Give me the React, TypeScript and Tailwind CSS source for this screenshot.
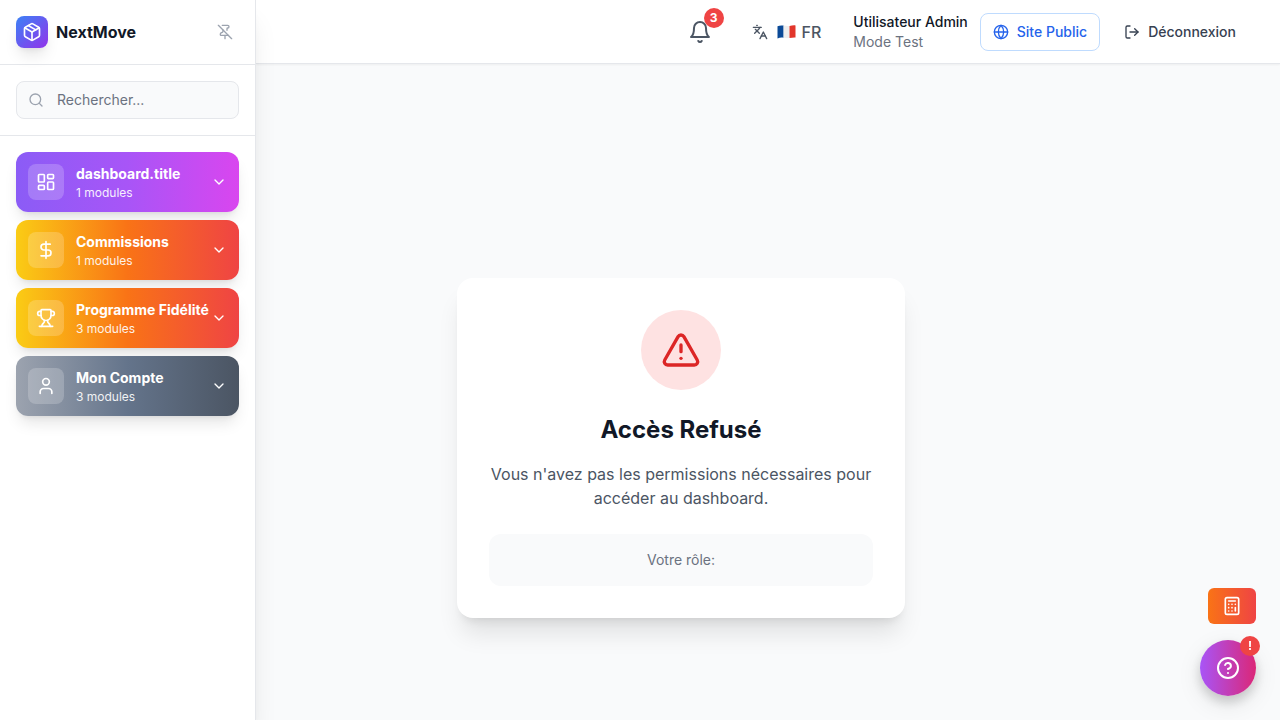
import {
  Calculator,
  ChevronDown,
  CircleHelp,
  DollarSign,
  Globe,
  Languages,
  LayoutDashboard,
  LogOut,
  Package,
  PinOff,
  Search,
  TriangleAlert,
  Trophy,
  User,
  type LucideIcon,
} from "lucide-react";

type Section = {
  title: string;
  count: number;
  icon: LucideIcon;
  gradient: string;
};

const sections: Section[] = [
  {
    title: "dashboard.title",
    count: 1,
    icon: LayoutDashboard,
    gradient: "from-[#8b5cf6] via-[#a855f7] to-[#d946ef]",
  },
  {
    title: "Commissions",
    count: 1,
    icon: DollarSign,
    gradient: "from-[#facc15] via-[#f97316] to-[#ef4444]",
  },
  {
    title: "Programme Fidélité",
    count: 3,
    icon: Trophy,
    gradient: "from-[#facc15] via-[#f97316] to-[#ef4444]",
  },
  {
    title: "Mon Compte",
    count: 3,
    icon: User,
    gradient: "from-[#9ca3af] via-[#64748b] to-[#4b5563]",
  },
];

function BellIcon() {
  return (
    <svg
      viewBox="0 0 24 24"
      className="size-6"
      fill="none"
      stroke="currentColor"
      strokeWidth="2"
      strokeLinecap="round"
      strokeLinejoin="round"
      aria-hidden="true"
    >
      <path d="M6 8a6 6 0 0 1 12 0c0 7 3 9 3 9H3s3-2 3-9" />
      <path d="M10.3 21a1.94 1.94 0 0 0 3.4 0" />
    </svg>
  );
}

function FrenchFlag() {
  return (
    <svg viewBox="0 0 20 14" className="h-3.5 w-5" role="img" aria-label="Français">
      <path d="M1.5 1.2C3.5 0.3 5.5 0.2 7.6 0.6V12.8C5.5 12.4 3.5 12.6 1.5 13.5Z" fill="#0b4a97" />
      <path d="M7.6 0.6C9.7 1 11.7 1.3 13.5 0.9V13.1C11.7 13.4 9.7 13.2 7.6 12.8Z" fill="#eeeeee" />
      <path d="M13.5 0.9C15.7 0.5 17.7 0.1 19.5 0.4V12.5C17.7 12.2 15.7 12.8 13.5 13.1Z" fill="#e2362b" />
    </svg>
  );
}

function SectionButton({ title, count, icon: Icon, gradient }: Section) {
  return (
    <button
      type="button"
      className={`flex w-full items-center gap-3 rounded-xl bg-linear-to-r/srgb p-3 text-left text-white shadow-lg ${gradient}`}
    >
      <span className="flex size-9 shrink-0 items-center justify-center rounded-lg bg-white/20">
        <Icon className="size-5" />
      </span>
      <span className="-my-1 min-w-0 flex-1 whitespace-nowrap">
        <span className="block text-sm leading-[22px] font-bold">{title}</span>
        <span className="block text-xs leading-4 opacity-90">{count} modules</span>
      </span>
      <ChevronDown className="-ml-3 size-4 shrink-0" />
    </button>
  );
}

function Sidebar() {
  return (
    <aside className="z-20 flex w-64 shrink-0 flex-col border-r border-[#e5e7eb] bg-white shadow-xl">
      <div className="flex items-center justify-between border-b border-[#e5e7eb] p-4">
        <div className="flex items-center gap-2">
          <div className="flex size-8 items-center justify-center rounded-lg bg-linear-to-br/srgb from-[#3b82f6] to-[#9333ea] text-white shadow-lg">
            <Package className="size-5" />
          </div>
          <span className="font-bold text-[#111827]">NextMove</span>
        </div>
        <button type="button" aria-label="Détacher le menu" className="p-1.5 text-[#9ca3af]">
          <PinOff className="size-4" />
        </button>
      </div>
      <div className="border-b border-[#e5e7eb] p-4">
        <label className="flex items-center gap-[13px] rounded-lg border border-[#e5e7eb] bg-[#f9fafb] py-2 pr-3 pl-[11px]">
          <Search className="size-4 shrink-0 text-[#9ca3af]" />
          <input
            type="text"
            aria-label="Rechercher"
            placeholder="Rechercher..."
            className="h-5 w-full min-w-0 bg-transparent text-sm text-[#111827] outline-none placeholder:text-[#6b7280]"
          />
        </label>
      </div>
      <nav className="flex flex-col gap-2 p-4">
        {sections.map((section) => (
          <SectionButton key={section.title} {...section} />
        ))}
      </nav>
    </aside>
  );
}

function TopBar() {
  return (
    <header className="z-10 flex h-16 shrink-0 items-center justify-end gap-4 border-b border-[#e5e7eb] bg-white px-8 shadow-xs">
      <button type="button" aria-label="Notifications" className="relative p-2 text-[#4b5563]">
        <BellIcon />
        <span className="absolute -top-1 -right-1 flex size-5 items-center justify-center rounded-full bg-[#ef4444] text-xs font-bold text-white">
          3
        </span>
      </button>
      <button type="button" className="flex items-center gap-2 px-4 py-2 font-medium text-[#4b5563]">
        <Languages className="size-4" />
        <span className="flex items-center gap-1.5">
          <FrenchFlag />
          FR
        </span>
      </button>
      <div className="flex items-center gap-3 text-sm">
        <div>
          <p className="font-medium text-[#111827]">Utilisateur Admin</p>
          <p className="text-[#6b7280]">Mode Test</p>
        </div>
        <a
          href="#site"
          className="flex items-center gap-2 rounded-lg border border-[#bfdbfe] px-3 py-2 font-medium text-[#2563eb]"
        >
          <Globe className="size-4" />
          Site Public
        </a>
        <button type="button" className="flex items-center gap-2 px-3 py-2 font-medium text-[#374151]">
          <LogOut className="size-4" />
          Déconnexion
        </button>
      </div>
    </header>
  );
}

function AccessDenied() {
  return (
    <section className="w-full max-w-md rounded-2xl bg-white p-8 text-center shadow-xl">
      <div className="mx-auto mb-6 flex size-20 items-center justify-center rounded-full bg-[#fee2e2]">
        <TriangleAlert className="size-10 text-[#dc2626]" />
      </div>
      <h1 className="mb-4 text-2xl font-bold text-[#111827]">Accès Refusé</h1>
      <p className="mb-6 text-[#4b5563]">
        Vous n'avez pas les permissions nécessaires pour accéder au dashboard.
      </p>
      <div className="rounded-xl bg-[#f9fafb] p-4">
        <p className="text-sm text-[#6b7280]">Votre rôle:</p>
      </div>
    </section>
  );
}

function FloatingActions() {
  return (
    <div className="fixed right-6 bottom-6 z-30 flex flex-col items-end gap-4 text-white">
      <button
        type="button"
        aria-label="Calculatrice"
        className="flex h-9 w-12 items-center justify-center rounded-md bg-linear-to-r/srgb from-[#f97316] to-[#ef4444]"
      >
        <Calculator className="size-5" />
      </button>
      <button
        type="button"
        aria-label="Aide"
        className="relative flex size-14 items-center justify-center rounded-full bg-linear-to-r/srgb from-[#a855f7] to-[#db2777] shadow-[0_8px_24px_rgba(0,0,0,0.1),0_6px_12px_rgba(0,0,0,0.16)]"
      >
        <CircleHelp className="size-6" />
        <span className="absolute -top-1 -right-1 flex size-5 items-center justify-center rounded-full bg-[#ef4444] text-xs font-bold">
          !
        </span>
      </button>
    </div>
  );
}

export default function App() {
  return (
    <div className="flex h-screen overflow-hidden bg-[#f9fafb] font-['Inter',sans-serif] antialiased">
      <Sidebar />
      <div className="flex min-w-0 flex-1 flex-col">
        <TopBar />
        <main className="min-h-0 flex-1 overflow-hidden pt-6 pr-[198px] pl-6">
          <div className="flex min-h-screen items-center justify-center">
            <AccessDenied />
          </div>
        </main>
      </div>
      <FloatingActions />
    </div>
  );
}
